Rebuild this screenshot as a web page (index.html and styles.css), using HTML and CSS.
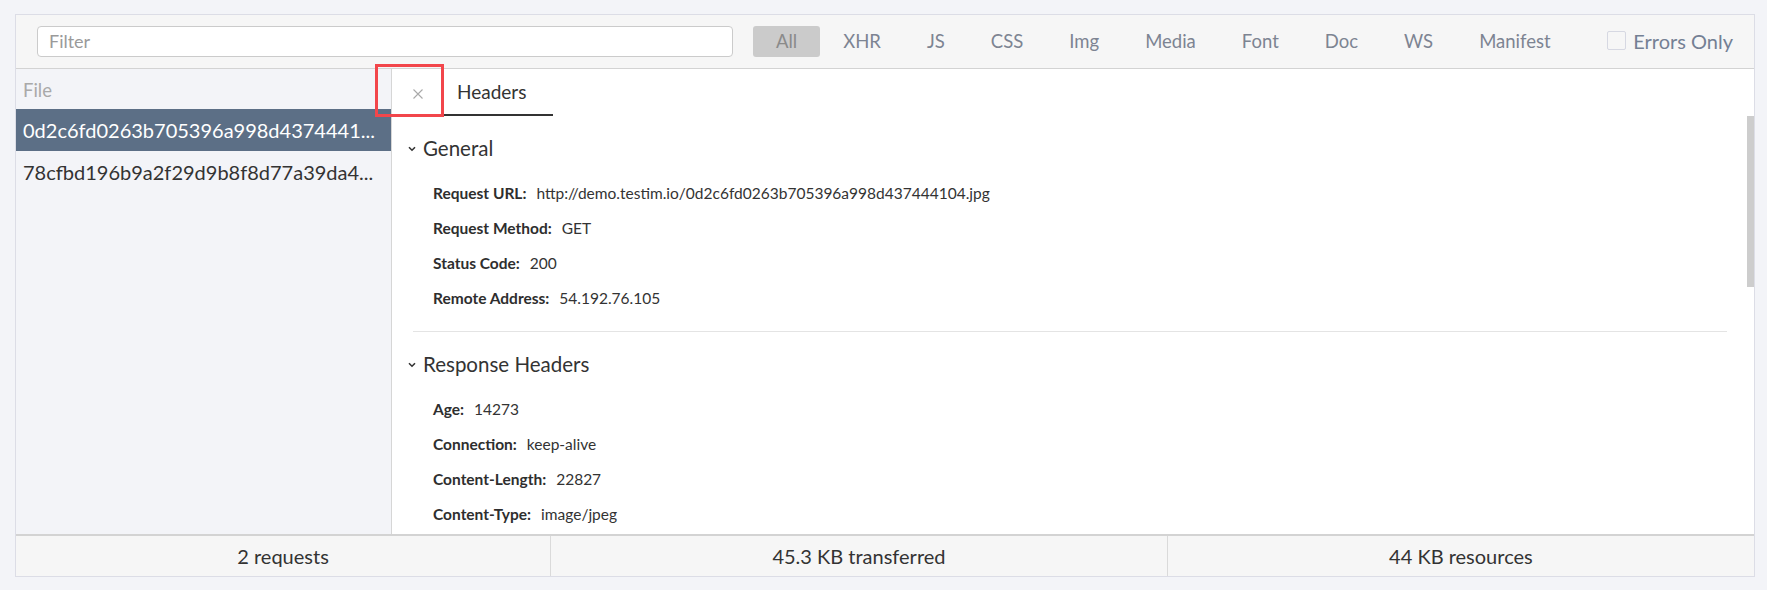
FILE: index.html
```html
<!DOCTYPE html>
<html lang="en">
<head>
<meta charset="utf-8">
<title>Network</title>
<link rel="stylesheet" href="styles.css">
</head>
<body>
<div class="frame">
  <div class="toolbar">
    <input class="filter" type="text" placeholder="Filter">
    <div class="types">
      <span class="type active">All</span>
      <span class="type">XHR</span>
      <span class="type">JS</span>
      <span class="type">CSS</span>
      <span class="type">Img</span>
      <span class="type">Media</span>
      <span class="type">Font</span>
      <span class="type">Doc</span>
      <span class="type">WS</span>
      <span class="type">Manifest</span>
    </div>
    <label class="errors"><span class="checkbox"></span>Errors Only</label>
  </div>
  <div class="main">
    <div class="files">
      <div class="files-head">File</div>
      <div class="file selected">0d2c6fd0263b705396a998d4374441...</div>
      <div class="file">78cfbd196b9a2f29d9b8f8d77a39da4...</div>
    </div>
    <div class="details">
      <div class="tabs">
        <div class="tab-close">
          <svg width="10" height="10" viewBox="0 0 10 10"><path d="M0.5 0.5 L9.5 9.5 M9.5 0.5 L0.5 9.5" stroke="#a9a9a9" stroke-width="1.1" fill="none"/></svg>
        </div>
        <div class="tab active">Headers</div>
      </div>
      <div class="highlight"></div>
      <div class="pane">
        <div class="content">
          <div class="section-head">
            <svg class="caret" width="8" height="6" viewBox="0 0 8 6"><path d="M1 1.2 L4 4.2 L7 1.2" stroke="#333" stroke-width="1.6" fill="none"/></svg>
            <span>General</span>
          </div>
          <div class="rows">
            <div class="row"><b>Request URL:</b><span>http://demo.testim.io/0d2c6fd0263b705396a998d437444104.jpg</span></div>
            <div class="row"><b>Request Method:</b><span>GET</span></div>
            <div class="row"><b>Status Code:</b><span>200</span></div>
            <div class="row"><b>Remote Address:</b><span>54.192.76.105</span></div>
          </div>
          <div class="sep"></div>
          <div class="section-head">
            <svg class="caret" width="8" height="6" viewBox="0 0 8 6"><path d="M1 1.2 L4 4.2 L7 1.2" stroke="#333" stroke-width="1.6" fill="none"/></svg>
            <span>Response Headers</span>
          </div>
          <div class="rows">
            <div class="row"><b>Age:</b><span>14273</span></div>
            <div class="row"><b>Connection:</b><span>keep-alive</span></div>
            <div class="row"><b>Content-Length:</b><span>22827</span></div>
            <div class="row"><b>Content-Type:</b><span>image/jpeg</span></div>
          </div>
        </div>
        <div class="track"><div class="thumb"></div></div>
      </div>
    </div>
  </div>
  <div class="footer">
    <div class="stat">2 requests</div>
    <div class="stat">45.3 KB transferred</div>
    <div class="stat">44 KB resources</div>
  </div>
</div>
</body>
</html>
```
FILE: styles.css
```css
* { box-sizing: border-box; }
html, body { height: 100%; }
body {
  margin: 0;
  padding: 14px 12px 13px 15px;
  background: #f3f4f8;
  font-family: "Lato", "Open Sans", sans-serif;
  color: #333;
}
.frame {
  height: 563px;
  border: 1px solid #dcdde6;
  display: flex;
  flex-direction: column;
  background: #f3f4f8;
}
.toolbar {
  height: 54px;
  flex: none;
  background: #f6f6f6;
  border-bottom: 1px solid #d3d3d3;
  display: flex;
  align-items: center;
  padding: 0 21px 1px 21px;
}
.filter {
  width: 696px;
  height: 31px;
  border: 1px solid #cbcbcb;
  border-radius: 4px;
  background: #fff;
  padding: 0 11px;
  font-family: inherit;
  font-size: 18px;
  color: #333;
  outline: none;
}
.filter::placeholder { color: #9a9a9a; }
.types {
  display: flex;
  margin-left: 20px;
}
.type {
  height: 31px;
  line-height: 31px;
  padding: 0 23px;
  font-size: 18.5px;
  color: #7d8492;
  border-radius: 3px;
}
.type.active {
  background: #cbcbcb;
  color: #8a8a8a;
}
.errors {
  margin-left: auto;
  display: flex;
  align-items: center;
  font-size: 20px;
  color: #748094;
}
.checkbox {
  width: 19px;
  height: 19px;
  border: 1px solid #d6d8e2;
  border-radius: 2px;
  margin-right: 7px;
  margin-top: -2px;
}
.main {
  flex: 1;
  display: flex;
  min-height: 0;
}
.files {
  width: 376px;
  flex: none;
  background: #f3f4f8;
  border-right: 1px solid #d6d6d6;
}
.files-head {
  height: 40px;
  line-height: 42px;
  padding-left: 7px;
  font-size: 18.5px;
  color: #a9a9a9;
}
.file {
  height: 42px;
  line-height: 42px;
  padding: 0 9px 0 7px;
  font-size: 20px;
  color: #333;
  white-space: nowrap;
}
.file.selected {
  background: #5c6f86;
  color: #fff;
}
.details {
  flex: 1;
  display: flex;
  flex-direction: column;
  background: #fff;
  min-width: 0;
  position: relative;
}
.tabs {
  height: 47px;
  flex: none;
  display: flex;
}
.tab-close {
  width: 52px;
  display: flex;
  align-items: center;
  justify-content: center;
  padding-top: 2px;
}
.tab {
  padding: 0 21px 0 13px;
  width: 109px;
  line-height: 45px;
  font-size: 19px;
  color: #333;
}
.tab.active { border-bottom: 2px solid #333; }
.highlight {
  position: absolute;
  left: -17px;
  top: -5px;
  width: 69px;
  height: 53px;
  border: 3px solid #f2464b;
  pointer-events: none;
}
.pane {
  flex: 1;
  display: flex;
  min-height: 0;
}
.content {
  flex: 1;
  min-width: 0;
}
.track {
  width: 7px;
  flex: none;
}
.thumb {
  height: 171px;
  background: #cdcdcd;
}
.section-head {
  height: 40px;
  margin-top: 12px;
  display: flex;
  align-items: center;
  padding-left: 16px;
  font-size: 20.5px;
  color: #333;
}
.caret { margin-right: 7px; margin-top: 1px; }
.rows {
  padding: 7px 0 16px 41px;
}
.row {
  height: 35px;
  display: flex;
  align-items: center;
  font-size: 15.5px;
  color: #333;
  white-space: nowrap;
}
.row b {
  font-weight: 700;
  color: #2e2e2e;
  margin-right: 10px;
}
.sep {
  height: 1px;
  background: #e4e4e4;
  margin: 0 20px 0 21px;
}
.footer {
  height: 42px;
  flex: none;
  display: flex;
  background: #f6f6f6;
  border-top: 2px solid #d3d3d3;
}
.stat {
  flex: 1 1 auto;
  display: flex;
  align-items: center;
  justify-content: center;
  font-size: 20px;
  color: #333;
  border-left: 1px solid #dadada;
}
.stat:first-child { border-left: none; }
```
